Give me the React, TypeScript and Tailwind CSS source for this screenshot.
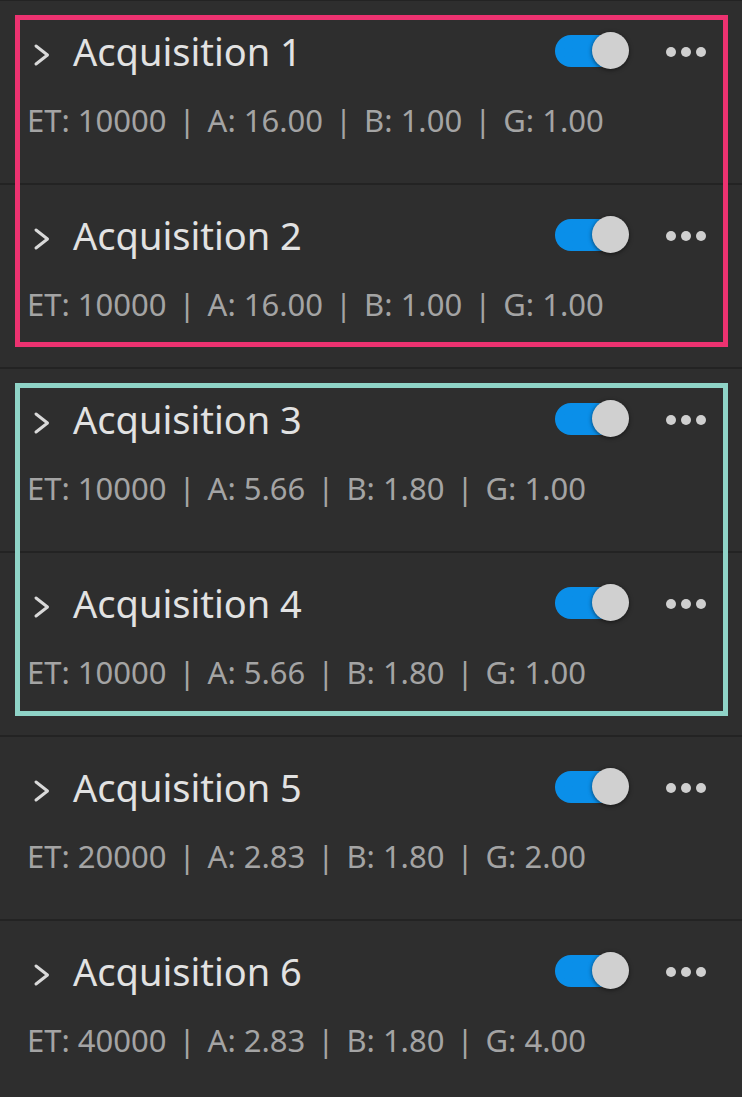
import { Fragment } from "react";

const acquisitions = [
  { name: "Acquisition 1", et: "10000", a: "16.00", b: "1.00", g: "1.00" },
  { name: "Acquisition 2", et: "10000", a: "16.00", b: "1.00", g: "1.00" },
  { name: "Acquisition 3", et: "10000", a: "5.66", b: "1.80", g: "1.00" },
  { name: "Acquisition 4", et: "10000", a: "5.66", b: "1.80", g: "1.00" },
  { name: "Acquisition 5", et: "20000", a: "2.83", b: "1.80", g: "2.00" },
  { name: "Acquisition 6", et: "40000", a: "2.83", b: "1.80", g: "4.00" },
];

function Toggle() {
  return (
    <div className="relative w-[74px] h-[38px] shrink-0">
      <div className="absolute left-0 top-[3px] w-[66px] h-[32px] rounded-full bg-gradient-to-r from-[#0a8fe9] from-60% to-[#0677c4]" />
      <div className="absolute right-0 top-0 w-[37px] h-[37px] rounded-full bg-[#d0d0d0] shadow-[0_1px_4px_rgba(0,0,0,0.55)]" />
    </div>
  );
}

function Dots() {
  return (
    <div className="flex items-center gap-[5px] ml-[37px] mt-[2px]">
      <span className="w-[10px] h-[10px] rounded-full bg-[#cfcfcf]" />
      <span className="w-[10px] h-[10px] rounded-full bg-[#cfcfcf]" />
      <span className="w-[10px] h-[10px] rounded-full bg-[#cfcfcf]" />
    </div>
  );
}

function Row({ item }: { item: (typeof acquisitions)[number] }) {
  const parts = [`ET: ${item.et}`, `A: ${item.a}`, `B: ${item.b}`, `G: ${item.g}`];
  return (
    <div className="h-[184px] border-b-2 border-[#232323] pl-[26px] pr-[36px] pt-[31px]">
      <div className="flex items-center h-[38px]">
        <svg className="ml-[7px] mt-2 w-[18px] h-[24px] shrink-0" viewBox="0 0 18 24" fill="none">
          <path d="M3 3 L14.5 12 L3 21" stroke="#d9d9d9" strokeWidth="3" strokeLinecap="round" strokeLinejoin="round" />
        </svg>
        <span className="ml-[22px] text-[38px] leading-[38px] text-[#e2e2e2] whitespace-nowrap">{item.name}</span>
        <div className="flex-1" />
        <Toggle />
        <Dots />
      </div>
      <div className="mt-[35px] ml-[1px] text-[31px] leading-[31px] text-[#a4a4a4] whitespace-nowrap">
        {parts.map((p, i) => (
          <Fragment key={p + i}>
            {i > 0 && <span className="mx-[12px]">|</span>}
            {p}
          </Fragment>
        ))}
      </div>
    </div>
  );
}

export default function App() {
  return (
    <div
      className="relative h-[1097px] overflow-hidden bg-[#2e2e2e] border-t border-[#232323]"
      style={{ fontFamily: '"Noto Sans", "Open Sans", sans-serif' }}
    >
      {acquisitions.map((a) => (
        <Row key={a.name} item={a} />
      ))}
      <div className="absolute left-[15px] top-[14px] w-[713px] h-[332px] border-[5px] border-[#ec3270] pointer-events-none" />
      <div className="absolute left-[15px] top-[382px] w-[713px] h-[333px] border-[5px] border-[#8fd3c7] pointer-events-none" />
    </div>
  );
}
